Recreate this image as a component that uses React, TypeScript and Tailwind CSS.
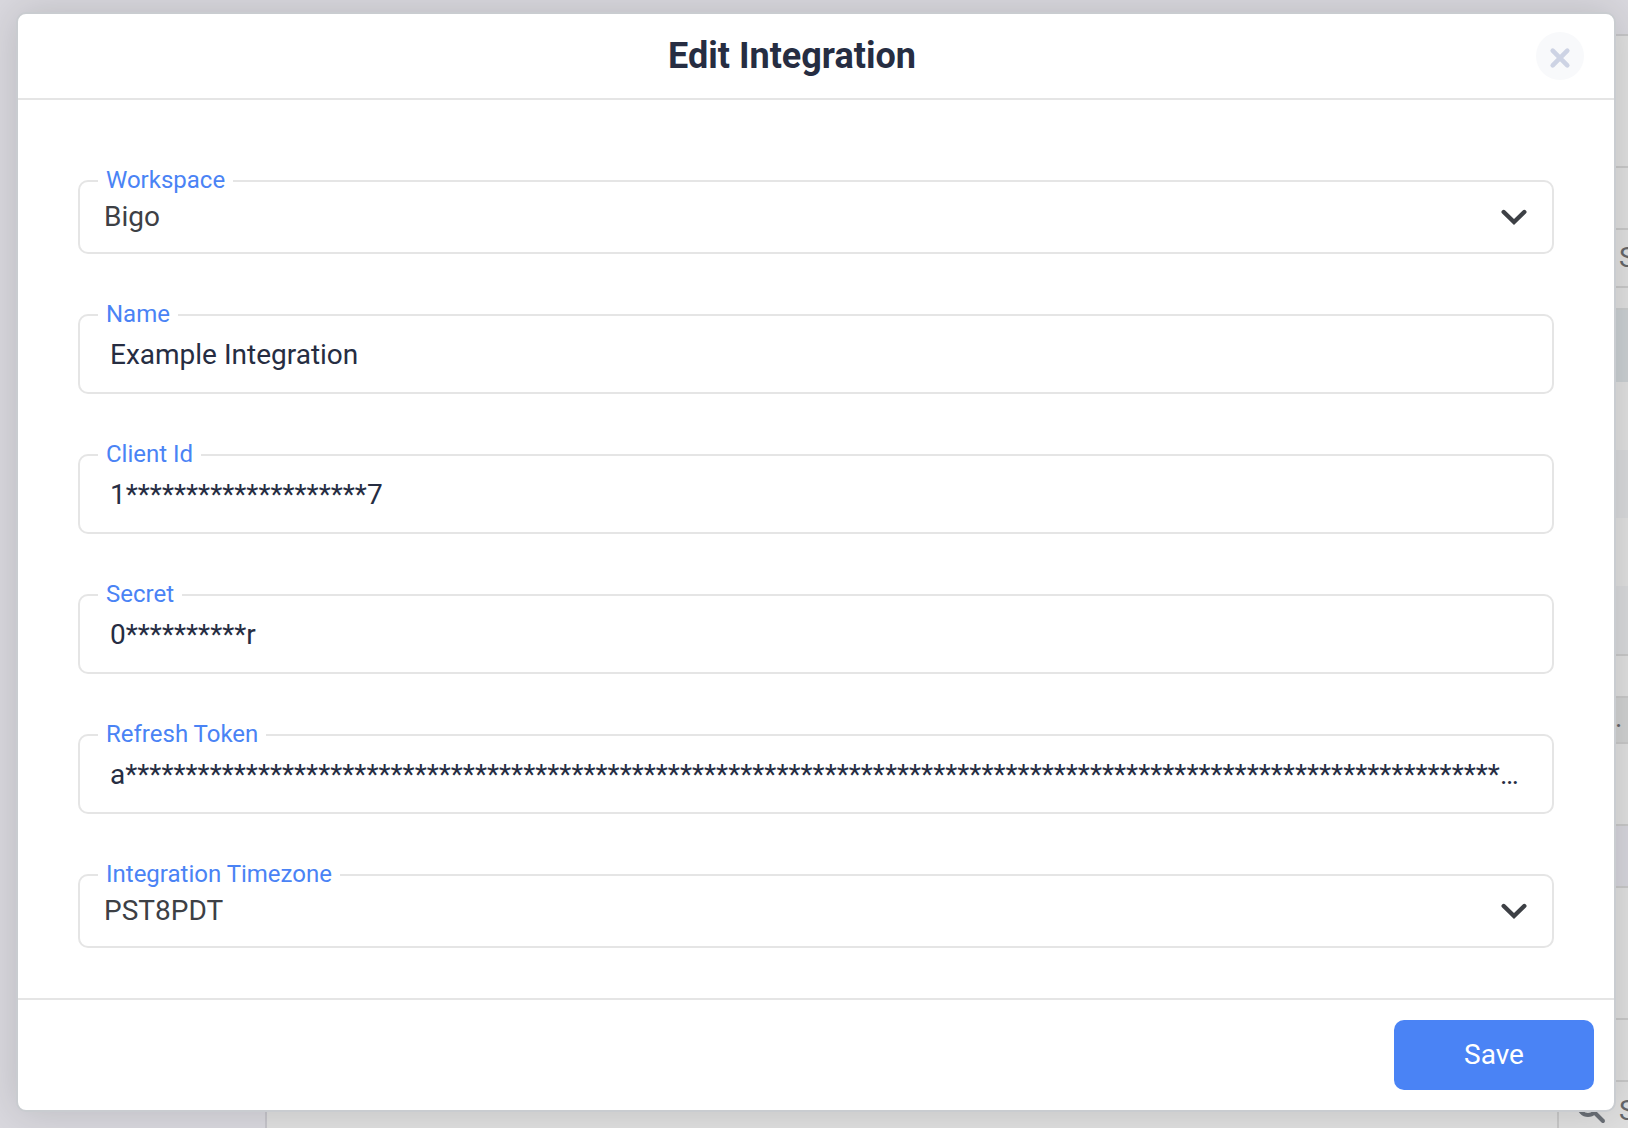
import React from "react";

type FieldProps = {
  id: string;
  label: string;
  value: string;
};

const labelClass =
  "absolute -top-3.5 left-[18px] bg-white px-2 text-[24px] leading-[24px] text-[#4a83f5]";

function TextField({ id, label, value }: FieldProps) {
  return (
    <div className="relative rounded-[10px] border-2 border-[#e5e5e5]">
      <label htmlFor={id} className={labelClass}>
        {label}
      </label>
      <input
        id={id}
        type="text"
        defaultValue={value}
        className="block h-[76px] w-full rounded-lg bg-transparent px-[30px] text-[28px] text-ellipsis text-[#262d42] outline-none"
      />
    </div>
  );
}

function SelectField({ id, label, value }: FieldProps) {
  return (
    <div className="relative rounded-[10px] border-2 border-[#e5e5e5]">
      <label htmlFor={id} className={labelClass}>
        {label}
      </label>
      <div className="grid items-center">
        <select
          id={id}
          defaultValue={value}
          className="col-start-1 row-start-1 block h-[70px] w-full appearance-none rounded-lg bg-transparent px-6 text-[28px] text-[#3d4045] outline-none"
        >
          <option value={value}>{value}</option>
        </select>
        <svg
          className="pointer-events-none col-start-1 row-start-1 mr-6 h-[18px] w-7 justify-self-end"
          viewBox="0 0 28 18"
          fill="none"
          stroke="#3d4045"
          strokeWidth="4.4"
          strokeLinecap="round"
          aria-hidden="true"
        >
          <path d="M3.7 4 L14 14 L24.3 4" strokeLinejoin="miter" />
        </svg>
      </div>
    </div>
  );
}

function Backdrop() {
  return (
    <div
      aria-hidden="true"
      className="absolute inset-0 flex flex-col overflow-hidden text-[28px] text-[#66676a]"
    >
      <div className="flex h-9 shrink-0">
        <div className="w-[265px]" />
        <div className="flex-1 border-b-2 border-[#c6c6c8]" />
      </div>
      <div className="flex flex-1">
        <div className="w-[267px] shrink-0 border-r-2 border-[#c6c5cb]" />
        <div className="flex flex-1 flex-col bg-[#dfdfdf]">
          <div className="h-[132px] border-b-2 border-[#c8c8c8]" />
          <div className="h-[62px] border-b-2 border-[#c8c8c8]" />
          <div className="flex h-[58px] items-center justify-end border-b-2 border-[#c8c8c8]">
            <span className="w-[9px] overflow-hidden">S</span>
          </div>
          <div className="h-[22px] border-b-2 border-[#cacccd]" />
          <div className="h-[72px] bg-[#cacfd2]" />
          <div className="h-[68px]" />
          <div className="h-[68px] bg-[#d8d9db]" />
          <div className="h-[68px]" />
          <div className="h-[70px] border-b-2 border-[#c8c8c8] bg-[#d8d9db]" />
          <div className="h-[42px] border-b-2 border-[#c8c8c8]" />
          <div className="flex h-[46px] items-center justify-end border-b-2 border-[#c8c8c8] bg-[#d0d1d1]">
            <span className="w-[13px] pb-1">.</span>
          </div>
          <div className="h-[82px] border-b-2 border-[#c8c8c8]" />
          <div className="h-[62px] border-b-2 border-[#c8c8c8] bg-[#d6d5dc]" />
          <div className="h-[132px] border-b-2 border-[#c8c8c8]" />
          <div className="h-[62px] border-b-2 border-[#c8c8c8]" />
          <div className="flex flex-1 justify-end">
            <div className="flex w-[71px] items-center justify-between border-l-2 border-[#c8c8c8] pt-2 pl-[18px]">
              <svg
                className="h-[30px] w-[30px]"
                viewBox="0 0 30 30"
                fill="none"
                stroke="#6a6f76"
                strokeWidth="4"
                strokeLinecap="round"
              >
                <circle cx="11" cy="10" r="9" />
                <path d="M18 17 L26 25" />
              </svg>
              <span className="w-[9px] overflow-hidden">S</span>
            </div>
          </div>
        </div>
      </div>
    </div>
  );
}

export default function App() {
  return (
    <div className="relative min-h-screen bg-[#d9d8de] pt-3 pr-3 pb-4 pl-4 font-[Roboto,sans-serif]">
      <Backdrop />
      <div
        role="dialog"
        aria-labelledby="dialog-title"
        className="relative rounded-[10px] border-2 border-[#c9ccd0] bg-white shadow-[0_0_40px_rgba(0,0,0,0.14)]"
      >
        <header className="flex h-[86px] items-center border-b-2 border-[#e5e5e5] pr-[30px]">
          <h1
            id="dialog-title"
            className="flex-1 pl-[30px] text-center text-[36px] leading-[44px] font-bold text-[#262d42]"
          >
            Edit Integration
          </h1>
          <button
            type="button"
            aria-label="Close"
            className="flex h-12 w-12 items-center justify-center rounded-full bg-[#f8f9fb] pt-1"
          >
            <svg
              className="h-6 w-6"
              viewBox="0 0 24 24"
              fill="none"
              stroke="#cdd3e4"
              strokeWidth="4.6"
              strokeLinecap="round"
              aria-hidden="true"
            >
              <path d="M4.7 4.7 L19.3 19.3 M19.3 4.7 L4.7 19.3" />
            </svg>
          </button>
        </header>

        <form id="integration-form" className="flex flex-col gap-[60px] px-[60px] pt-20 pb-[50px]">
          <SelectField id="workspace" label="Workspace" value="Bigo" />
          <TextField id="name" label="Name" value="Example Integration" />
          <TextField id="client-id" label="Client Id" value={"1" + "*".repeat(20) + "7"} />
          <TextField id="secret" label="Secret" value={"0" + "*".repeat(10) + "r"} />
          <TextField id="refresh-token" label="Refresh Token" value={"a" + "*".repeat(130)} />
          <SelectField id="timezone" label="Integration Timezone" value="PST8PDT" />
        </form>

        <footer className="flex justify-end border-t-2 border-[#e5e5e5] p-5">
          <button
            type="submit"
            form="integration-form"
            className="h-[70px] w-[200px] rounded-[10px] bg-[#4a83f5] text-[28px] text-white"
          >
            Save
          </button>
        </footer>
      </div>
    </div>
  );
}
